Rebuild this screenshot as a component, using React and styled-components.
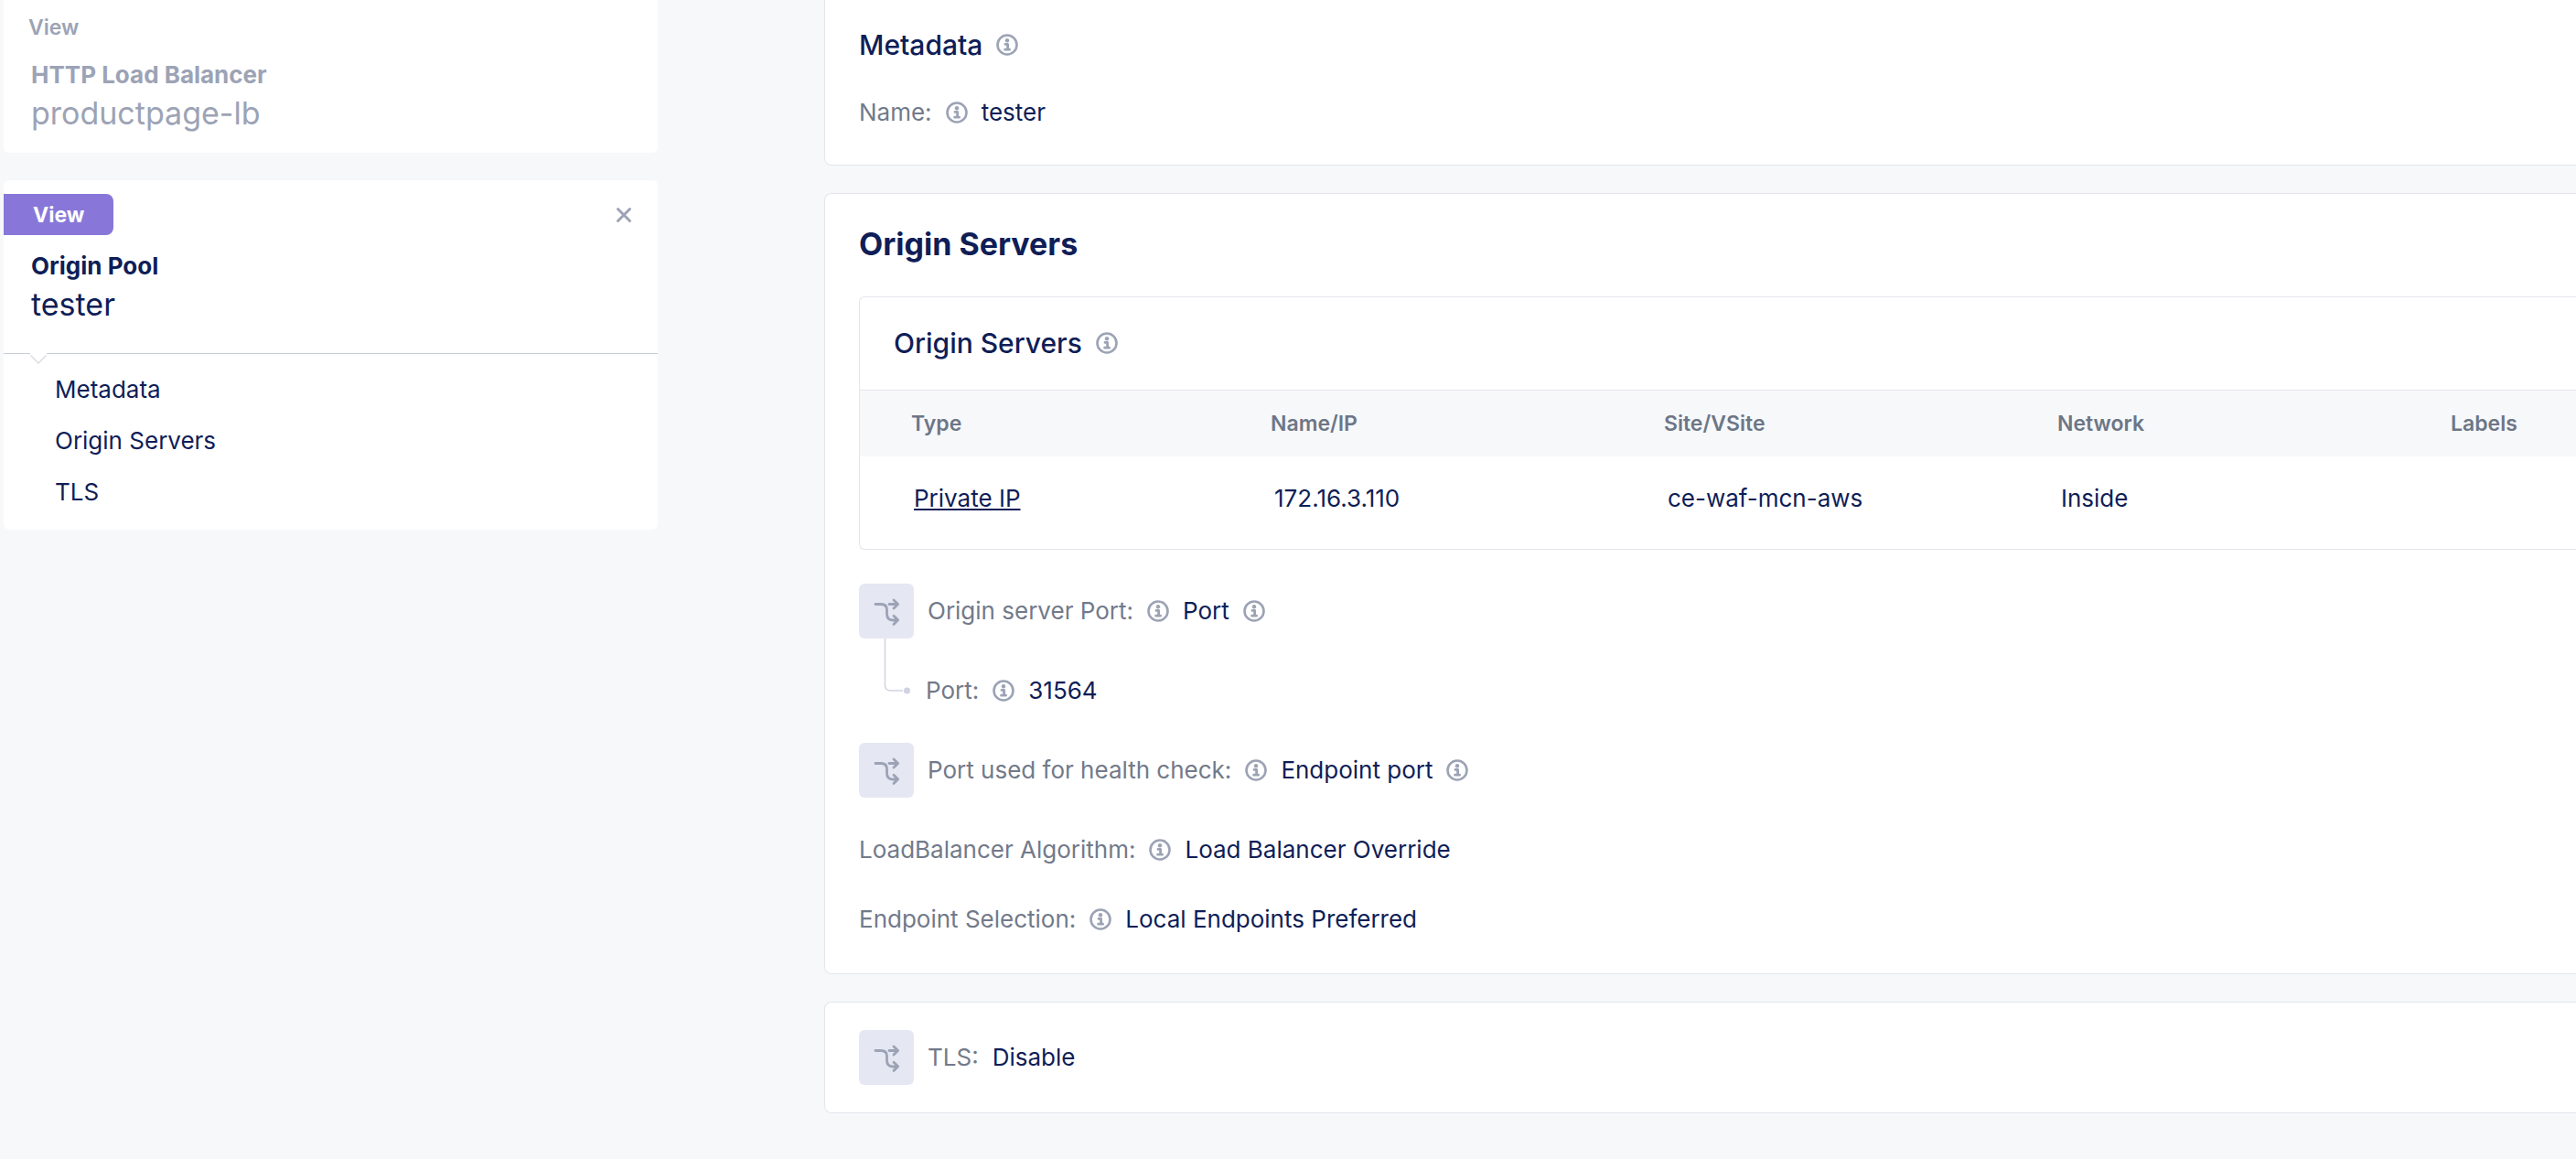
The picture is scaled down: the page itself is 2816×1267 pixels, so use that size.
import React from "react";
import styled, { createGlobalStyle } from "styled-components";

const navy = "#0f1e57";
const muted = "#9ca3b5";
const label = "#727a8a";
const line = "#e4e6ec";
const surface = "#f7f8fa";

const GlobalStyle = createGlobalStyle`
  * { box-sizing: border-box; }
  body {
    margin: 0;
    background: ${surface};
    color: ${navy};
    font-family: Inter, "Liberation Sans", sans-serif;
    font-size: 26px;
    line-height: 32px;
    font-weight: 400;
    overflow-x: hidden;
  }
  h1, h2, h3, p, ul, dl, dd { margin: 0; padding: 0; }
`;

const Page = styled.div`
  display: grid;
  grid-template-columns: 719px minmax(0, 1fr);
  column-gap: 182px;
  align-items: start;
  padding-bottom: 48px;
`;

const Sidebar = styled.aside`
  display: flex;
  flex-direction: column;
  gap: 30px;
  padding-left: 4px;
`;

const SideCard = styled.section`
  background: #fff;
  color: ${(p) => (p.$inactive ? muted : navy)};
  border-radius: ${(p) => (p.$inactive ? "0 0 6px 6px" : "6px")};
`;

const SideTop = styled.div`
  display: flex;
  align-items: center;
  justify-content: space-between;
  padding: ${(p) => (p.$plain ? "16px 27px 0" : "15px 28px 0 0")};
`;

const PlainTag = styled.span`
  font-size: 23px;
  line-height: 28px;
  font-weight: 600;
`;

const Badge = styled.span`
  padding: 9px 32px 8px;
  border-radius: 0 8px 8px 0;
  background: #8877d9;
  color: #fff;
  font-size: 23px;
  line-height: 28px;
  font-weight: 700;
`;

const CloseButton = styled.button`
  display: grid;
  padding: 0;
  border: 0;
  background: none;
  color: ${muted};
  cursor: pointer;
`;

const SideHead = styled.div`
  padding: ${(p) => (p.$inactive ? "22px 30px 22px" : "18px 30px 32px")};
`;

const SideTitle = styled.h2`
  font-size: 26px;
  line-height: 32px;
  font-weight: 700;
`;

const SideName = styled.p`
  margin-top: 5px;
  font-size: 34px;
  line-height: 42px;
`;

const SideNav = styled.nav`
  position: relative;
  border-top: 1px solid #c9cdd6;
  padding: 23px 56px 25px;
`;

const Caret = styled.svg`
  position: absolute;
  top: -2px;
  left: 28px;
`;

const NavList = styled.ul`
  list-style: none;
  display: grid;
  row-gap: 24px;
`;

const NavLink = styled.a`
  color: inherit;
  text-decoration: none;
`;

const Main = styled.main`
  display: flex;
  flex-direction: column;
  gap: 30px;
`;

const Card = styled.section`
  background: #fff;
  border: 1px solid ${line};
  border-right: 0;
  border-radius: 8px 0 0 8px;
  padding: ${(p) => p.$pad};
  ${(p) => p.$continued && "border-top: 0; border-top-left-radius: 0;"}
`;

const Heading = styled.h2`
  font-size: 34px;
  line-height: 40px;
  font-weight: 700;
`;

const Subheading = styled.h3`
  display: flex;
  align-items: center;
  gap: 15px;
  font-size: 30px;
  line-height: 36px;
  font-weight: 500;
`;

const TableCard = styled.div`
  margin: 37px 0;
  border: 1px solid ${line};
  border-right: 0;
  border-radius: 6px 0 0 6px;
`;

const TableTitle = styled.div`
  padding: 32px 37px 33px;
`;

const Table = styled.table`
  width: 100%;
  table-layout: fixed;
  border-collapse: collapse;
  text-align: left;
`;

const Col = styled.col`
  width: ${(p) => (p.$rest ? "auto" : "430px")};
`;

const Th = styled.th`
  padding: 22px 0 22px 19px;
  border-top: 1px solid ${line};
  background: ${surface};
  color: #6d7686;
  font-size: 23px;
  line-height: 28px;
  font-weight: 600;
  &:first-child { padding-left: 56px; }
`;

const Td = styled.td`
  padding: 30px 0 39px 23px;
  &:first-child { padding-left: 59px; }
`;

const CellLink = styled.a`
  color: inherit;
  text-decoration: underline;
  text-decoration-thickness: 2px;
  text-underline-offset: 2px;
  text-decoration-skip-ink: none;
`;

const Fields = styled.dl`
  display: grid;
  row-gap: 38px;
`;

const Field = styled.div`
  display: flex;
  align-items: center;
  gap: 15px;
  min-height: ${(p) => (p.$tall ? "60px" : "38px")};
`;

const Label = styled.dt`
  color: ${label};
`;

const Value = styled.dd`
  display: flex;
  align-items: center;
  gap: 15px;
`;

const ChoiceTile = styled.span`
  display: grid;
  place-items: center;
  width: 60px;
  height: 60px;
  border-radius: 6px;
  background: #e5e7f3;
`;

const Branch = styled.div`
  display: flex;
  padding-left: 26px;
  gap: 15px;
`;

const Connector = styled.svg`
  flex: none;
  margin: -38px 0 0;
`;

const NameField = styled(Fields)`
  margin-top: 37px;
`;

function Info() {
  return (
    <svg width="24" height="24" viewBox="0 0 24 24" fill="none" role="img" aria-label="Info">
      <circle cx="12" cy="12" r="10.5" stroke={muted} strokeWidth="2.6" />
      <circle cx="12" cy="7.2" r="2.2" fill={muted} />
      <path d="M10 11.4h2.6v5M9.6 17.2h5" stroke={muted} strokeWidth="2.8" strokeLinejoin="round" strokeLinecap="round" />
    </svg>
  );
}

function Choice() {
  return (
    <ChoiceTile>
      <svg width="60" height="60" viewBox="0 0 60 60" fill="none" stroke="#9ca3b5" strokeWidth="2.8" strokeLinecap="round" strokeLinejoin="round" aria-hidden="true">
        <path d="M18 22.5h6c4 0 6.5 2 6.5 6v4.5c0 4.500 2.200 7 6.500 7H42M38 35.200l4.600 4.600L38 44.400" />
        <path d="M33 22.500h9M38 18l4.600 4.500L38 27" />
      </svg>
    </ChoiceTile>
  );
}

const columns = ["Type", "Name/IP", "Site/VSite", "Network", "Labels"];

export default function App() {
  return (
    <>
      <GlobalStyle />
      <Page>
        <Sidebar>
          <SideCard $inactive>
            <SideTop $plain>
              <PlainTag>View</PlainTag>
            </SideTop>
            <SideHead $inactive>
              <SideTitle>HTTP Load Balancer</SideTitle>
              <SideName>productpage-lb</SideName>
            </SideHead>
          </SideCard>

          <SideCard>
            <SideTop>
              <Badge>View</Badge>
              <CloseButton type="button" aria-label="Close">
                <svg width="18" height="18" viewBox="0 0 18 18" fill="none" stroke="currentColor" strokeWidth="3" strokeLinecap="round">
                  <path d="M2.500 2.500l13 13M15.500 2.500l-13 13" />
                </svg>
              </CloseButton>
            </SideTop>
            <SideHead>
              <SideTitle>Origin Pool</SideTitle>
              <SideName>tester</SideName>
            </SideHead>
            <SideNav aria-label="Sections">
              <Caret width="20" height="14" viewBox="0 0 20 14" aria-hidden="true">
                <path d="M1 0L1 3L10 12L19 3L19 0Z" fill="#fff" />
                <path d="M1.500 3.500L10 12L18.500 3.500" fill="none" stroke="#dcdee4" strokeWidth="1.500" />
              </Caret>
              <NavList>
                <li><NavLink href="#metadata">Metadata</NavLink></li>
                <li><NavLink href="#origin-servers">Origin Servers</NavLink></li>
                <li><NavLink href="#tls">TLS</NavLink></li>
              </NavList>
            </SideNav>
          </SideCard>
        </Sidebar>

        <Main>
          <Card id="metadata" $continued $pad="31px 37px 38px">
            <Subheading>Metadata <Info /></Subheading>
            <NameField>
              <Field>
                <Label>Name:</Label>
                <Value><Info />tester</Value>
              </Field>
            </NameField>
          </Card>

          <Card id="origin-servers" $pad="35px 0 40px 37px">
            <Heading>Origin Servers</Heading>
            <TableCard>
              <TableTitle>
                <Subheading>Origin Servers <Info /></Subheading>
              </TableTitle>
              <Table>
                <colgroup>
                  {columns.map((c) => <Col key={c} $rest={c === "Labels"} />)}
                </colgroup>
                <thead>
                  <tr>{columns.map((c) => <Th key={c} scope="col">{c}</Th>)}</tr>
                </thead>
                <tbody>
                  <tr>
                    <Td><CellLink href="#private-ip">Private IP</CellLink></Td>
                    <Td>172.16.3.110</Td>
                    <Td>ce-waf-mcn-aws</Td>
                    <Td>Inside</Td>
                    <Td />
                  </tr>
                </tbody>
              </Table>
            </TableCard>

            <Fields>
              <Field $tall>
                <Choice />
                <Label>Origin server Port:</Label>
                <Value><Info />Port<Info /></Value>
              </Field>
              <Branch>
                <Connector width="32" height="64" viewBox="0 0 32 64" fill="none" aria-hidden="true">
                  <path d="M2.500 0V51q0 6 6 6H22" stroke="#d0d3e2" strokeWidth="1.500" />
                  <circle cx="26.500" cy="57" r="3.500" fill="#d0d3e2" />
                </Connector>
                <Field>
                  <Label>Port:</Label>
                  <Value><Info />31564</Value>
                </Field>
              </Branch>
              <Field $tall>
                <Choice />
                <Label>Port used for health check:</Label>
                <Value><Info />Endpoint port<Info /></Value>
              </Field>
              <Field>
                <Label>LoadBalancer Algorithm:</Label>
                <Value><Info />Load Balancer Override</Value>
              </Field>
              <Field>
                <Label>Endpoint Selection:</Label>
                <Value><Info />Local Endpoints Preferred</Value>
              </Field>
            </Fields>
          </Card>

          <Card id="tls" $pad="30px 37px">
            <Field $tall>
              <Choice />
              <Label>TLS:</Label>
              <Value>Disable</Value>
            </Field>
          </Card>
        </Main>
      </Page>
    </>
  );
}
